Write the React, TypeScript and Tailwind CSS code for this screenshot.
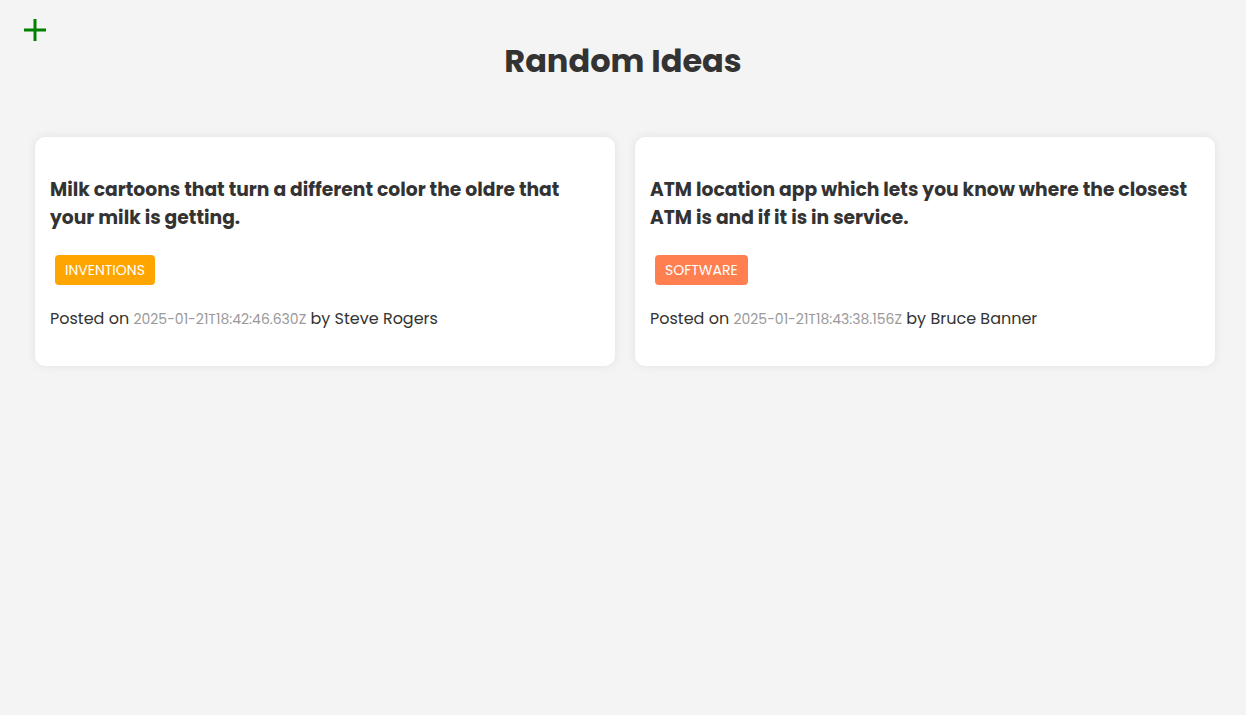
const ideas = [
  {
    text: "Milk cartoons that turn a different color the oldre that your milk is getting.",
    tag: "inventions",
    date: "2025-01-21T18:42:46.630Z",
    user: "Steve Rogers",
  },
  {
    text: "ATM location app which lets you know where the closest ATM is and if it is in service.",
    tag: "software",
    date: "2025-01-21T18:43:38.156Z",
    user: "Bruce Banner",
  },
];

const tagColors: Record<string, string> = {
  inventions: "bg-[#ffa500]",
  software: "bg-[#ff7f50]",
};

export default function App() {
  return (
    <div
      className="min-h-[715px] bg-[#f4f4f4] text-[#333]"
      style={{ fontFamily: "Poppins, 'DejaVu Sans', 'Open Sans', sans-serif" }}
    >
      {/* Add button */}
      <div className="h-[19px]" />
      <button className="ml-[24px] block h-[22px] w-[22px] text-[#008000]">
        <svg viewBox="0 0 22 22" width="22" height="22">
          <path d="M11 0v22M0 11h22" stroke="currentColor" strokeWidth="3" />
        </svg>
      </button>

      <h1 className="-mt-[4px] text-center text-[32px] font-bold leading-[48px]">Random Ideas</h1>

      <div className="ml-[35px] mt-[52px] grid w-[1180px] grid-cols-2 gap-5">
        {ideas.map((idea) => (
          <div key={idea.date} className="rounded-[10px] bg-white px-[15px] pt-[39px] pb-[34px] shadow-[0_0_10px_rgba(0,0,0,0.08)]">
            <h3 className="text-[18.72px] font-bold leading-[28px]">{idea.text}</h3>
            <p
              className={`ml-[5px] mt-[23px] inline-block h-[30px] rounded-[4px] px-[10px] text-[14px] uppercase leading-[30px] text-white ${tagColors[idea.tag]}`}
            >
              {idea.tag}
            </p>
            <p className="mt-[21px] text-[16px] leading-[26px]">
              Posted on <span className="text-[14px] text-[#999]">{idea.date}</span> by {idea.user}
            </p>
          </div>
        ))}
      </div>
    </div>
  );
}
